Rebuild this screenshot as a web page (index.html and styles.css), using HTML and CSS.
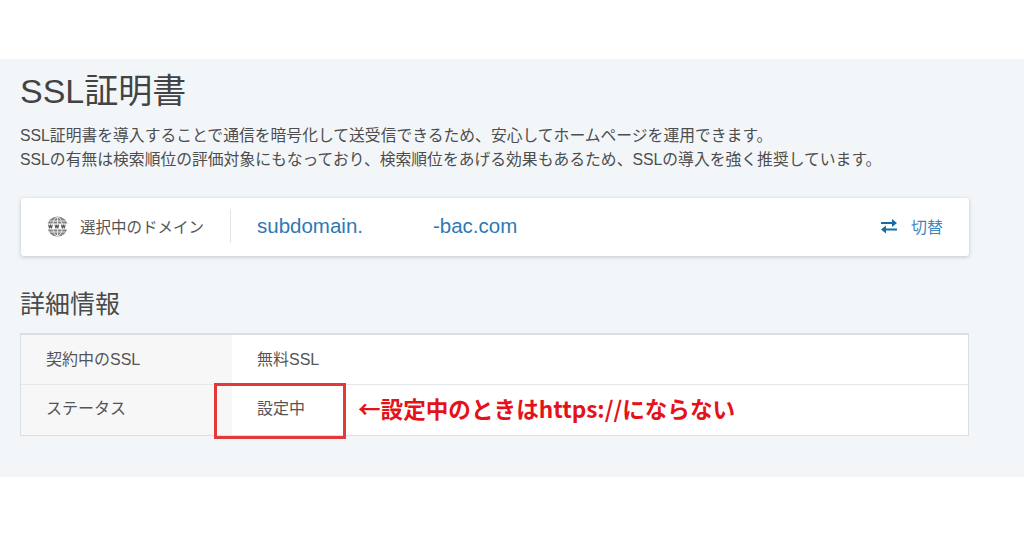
FILE: index.html
```html
<!DOCTYPE html>
<html lang="ja">
<head>
<meta charset="utf-8">
<title>SSL証明書</title>
<link rel="stylesheet" href="styles.css">
</head>
<body>
<main class="panel">
  <h1 class="title">SSL証明書</h1>
  <p class="lead">SSL証明書を導入することで通信を暗号化して送受信できるため、安心してホームページを運用できます。<br>SSLの有無は検索順位の評価対象にもなっており、検索順位をあげる効果もあるため、SSLの導入を強く推奨しています。</p>
  <section class="domain-card">
    <div class="domain-label">
      <svg class="globe" viewBox="0 0 20 20" width="21" height="21" aria-hidden="true">
        <circle cx="10" cy="10" r="9.6" fill="#858585"/>
        <ellipse cx="10" cy="10" rx="4.5" ry="9" fill="none" stroke="#e8e8e8" stroke-width=".9"/>
        <path d="M10 1v18M2.5 4.8h15M2.5 15.2h15" fill="none" stroke="#e8e8e8" stroke-width=".9"/>
        <rect x="0" y="7.2" width="20" height="5.6" fill="#fff"/>
        <path d="M1.5 8.2l.9 3.6.9-3.6.9 3.6.9-3.6M7.6 8.2l.9 3.6.9-3.6.9 3.6.9-3.6M13.7 8.2l.9 3.6.9-3.6.9 3.6.9-3.6" fill="none" stroke="#555" stroke-width="1"/>
      </svg>
      <span>選択中のドメイン</span>
    </div>
    <div class="domain-name"><span>subdomain.</span><span class="domain-tail">-bac.com</span></div>
    <a class="switch">
      <svg viewBox="0 0 18 16" width="18" height="16" aria-hidden="true">
        <path d="M1 5h12.5" fill="none" stroke="#1a6aa8" stroke-width="2"/>
        <path d="M12 1l5 4-5 4z" fill="#1a6aa8"/>
        <path d="M17 11.5H4.5" fill="none" stroke="#1a6aa8" stroke-width="2"/>
        <path d="M6 7.5l-5 4 5 4z" fill="#1a6aa8"/>
      </svg>
      <span>切替</span>
    </a>
  </section>
  <h2 class="subtitle">詳細情報</h2>
  <section class="detail">
    <div class="row">
      <div class="key">契約中のSSL</div>
      <div class="value">無料SSL</div>
    </div>
    <div class="row row-status">
      <div class="key">ステータス</div>
      <div class="value">設定中</div>
      <div class="mark"></div>
      <div class="note">←設定中のときはhttps://にならない</div>
    </div>
  </section>
</main>
</body>
</html>
```
FILE: styles.css
```css
* { box-sizing: border-box; }
html, body { margin: 0; height: 538px; overflow: hidden; background: #fff; }
body {
  padding-top: 59px;
  font-family: "Liberation Sans", "Noto Sans CJK JP", sans-serif;
  color: #4a4a4a;
}
.panel {
  height: 418px;
  padding: 9px 55px 0 20px;
  background: #f3f6f9;
}
.title {
  margin: 0;
  height: 46px;
  font-size: 34px;
  line-height: 46px;
  font-weight: 400;
  color: #434343;
}
.lead {
  margin: 10px 0 0;
  font-size: 15.8px;
  line-height: 24px;
  color: #4d4d4d;
  white-space: nowrap;
}
.domain-card {
  display: flex;
  align-items: center;
  height: 58px;
  margin: 26px 0 0 1px;
  padding: 0 26px 2px 26px;
  background: #fff;
  border-radius: 3px;
  box-shadow: 0 1px 4px rgba(60, 70, 90, .28);
}
.domain-label {
  display: flex;
  align-items: center;
  gap: 12px;
  width: 184px;
  height: 34px;
  border-right: 1px solid #e3e5e8;
  font-size: 15.5px;
  color: #555;
}
.globe { flex-shrink: 0; }
.domain-name {
  flex: 1;
  display: flex;
  padding-left: 26px;
  font-size: 20.5px;
  color: #2f78b5;
}
.domain-tail { margin-left: 70px; }
.switch {
  display: flex;
  align-items: center;
  gap: 13px;
  font-size: 16px;
  color: #3f87bf;
}
.subtitle {
  margin: 32px 0 0;
  height: 33px;
  font-size: 25px;
  line-height: 33px;
  font-weight: 400;
  color: #4a4a4a;
}
.detail {
  margin-top: 12px;
  border: 1px solid #dcdee2;
  border-top: 2px solid #dcdee2;
  background: #fff;
}
.row {
  display: flex;
  position: relative;
  height: 49px;
  font-size: 16px;
}
.row-status { border-top: 1px solid #e6e7ea; height: 51px; }
.key, .value { padding-bottom: 3px; }
.row-status .key, .row-status .value { padding-bottom: 7px; }
.key {
  display: flex;
  align-items: center;
  width: 211px;
  padding-left: 25px;
  background: #f7f7f8;
  color: #555;
}
.value {
  display: flex;
  align-items: center;
  padding-left: 25px;
  color: #555;
}
.mark {
  position: absolute;
  left: 193px;
  top: -2px;
  width: 132px;
  height: 56px;
  border: 3px solid #e23a3a;
}
.note {
  position: absolute;
  left: 337px;
  top: 8px;
  font-family: "Noto Sans CJK JP", sans-serif;
  font-size: 22.6px;
  line-height: 32px;
  font-weight: 700;
  color: #e5121a;
  white-space: nowrap;
}
```
